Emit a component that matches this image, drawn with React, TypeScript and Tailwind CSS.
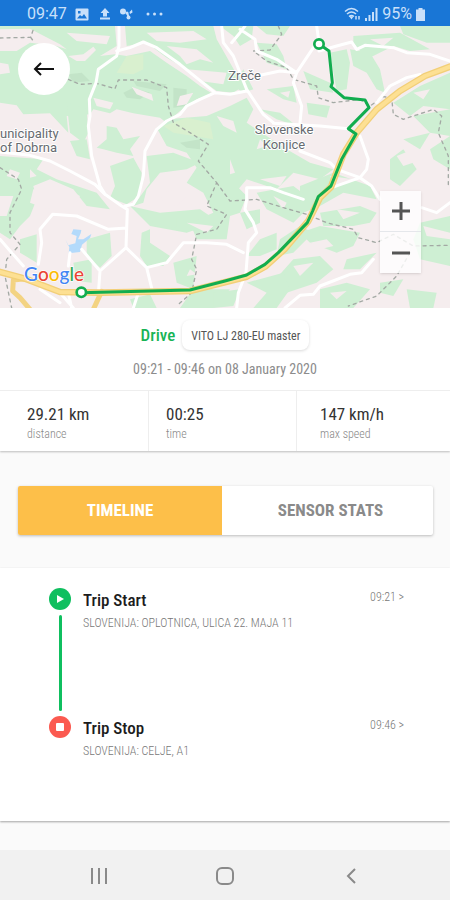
interface Stat {
    value: string;
    label: string;
    pad: string;
}

interface TripEvent {
    title: string;
    place: string;
    time: string;
    kind: "start" | "stop";
}

const stats: Stat[] = [
    { value: "29.21 km", label: "distance", pad: "pl-[27px]" },
    { value: "00:25", label: "time", pad: "pl-[17px]" },
    { value: "147 km/h", label: "max speed", pad: "pl-[23px]" },
];

const events: TripEvent[] = [
    { title: "Trip Start", place: "SLOVENIJA: OPLOTNICA, ULICA 22. MAJA 11", time: "09:21 >", kind: "start" },
    { title: "Trip Stop", place: "SLOVENIJA: CELJE, A1", time: "09:46 >", kind: "stop" },
];

// wooded areas
const woods = [
    "M0 0H345L350 60 300 90 345 85 380 90 450 75 500 110 560 150 600 180 640 205 590 220 540 255 500 290 480 275 400 262 350 250 330 262 280 250 270 265 200 270 205 320 150 262 70 265 50 238 0 230Z",
    "M375 0H640L650 40 690 110 730 180 700 200 650 195 560 130 500 95 440 50 380 60Z",
    "M660 0H760L755 40 720 60 700 30Z",
    "M770 0H870L850 30 800 25Z",
    "M770 50L830 55 850 90 860 130 800 110Z",
    "M470 305L500 280 620 270 690 240 740 215 760 250 740 290 800 330 860 370 930 410 1000 430 960 460 880 440 830 490 740 460 690 520 660 490 600 440 560 380 500 360Z",
    "M200 230L260 250 265 320 250 350 210 320Z",
    "M210 345L260 340 270 400 230 390Z",
    "M320 300L350 305 370 340 420 330 390 370 400 390 350 380 310 370 290 365 320 340Z",
    "M330 420L400 395 425 440 420 510 380 535 330 515 345 480Z",
    "M0 390L130 400 110 430 170 460 230 480 290 500 330 550 260 540 220 490 150 460 100 480 110 520 90 570 60 600 30 640 0 620Z",
    "M60 640L110 625 110 710 60 680Z",
    "M260 640L330 620 335 690 300 725 260 690Z",
    "M220 710L275 700 275 770 230 765Z",
    "M440 390L520 380 600 410 560 430 480 440 440 490 430 530 400 540 450 470Z",
    "M390 540L480 560 600 550 630 570 590 590 620 600 560 620 450 600Z",
    "M620 380L680 450 740 510 720 560 690 570 680 640 590 640 570 590 640 560 610 500 560 470Z",
    "M425 620L450 610 450 650 510 690 490 720 440 720 420 690Z",
    "M520 710L590 690 580 780 640 790 690 790 640 846H540L580 790 530 770Z",
    "M450 575L530 575 530 605 465 600Z",
    "M730 130L760 190 730 200 700 180Z",
    "M910 135L990 170 1000 200 930 190Z",
    "M990 80L1040 70 1050 110 1040 190 1010 195Z",
    "M1050 70L1110 80 1140 130 1155 200 1130 190 1100 140 1060 120Z",
    "M1060 30L1200 20 1290 70 1230 75 1180 60 1100 100 1060 50Z",
    "M1200 0H1350V50L1280 50 1210 25Z",
    "M800 190L880 180 890 230 850 220Z",
    "M780 250L840 260 890 300 830 280Z",
    "M920 230L990 240 980 275 925 265Z",
    "M1180 230L1260 180 1350 140V250L1270 240 1230 270Z",
    "M1240 270L1350 250V330L1290 320Z",
    "M1170 400L1210 370 1250 430 1200 480 1170 460Z",
    "M1210 340L1290 320 1260 370Z",
    "M1290 370L1350 330V430L1300 400Z",
    "M900 480L1000 440 1110 480 1130 520 1030 500 960 540 900 520Z",
    "M770 500L880 480 960 540 910 560 880 590 800 550Z",
    "M960 560L1080 540 1130 560 1110 590 1060 600 970 600Z",
    "M900 620L960 600 1080 620 1060 660 1010 680 930 650Z",
    "M1260 590L1350 570V720L1260 700 1240 640Z",
    "M840 640L900 600 940 620 880 680 830 690Z",
    "M720 560L780 550 780 590 740 610Z",
    "M780 640L830 620 830 670 780 690 740 690Z",
    "M880 700L960 690 1000 730 950 770 860 800 800 790Z",
    "M740 770L850 740 870 790 830 846H760L800 800Z",
    "M1040 700L1130 680 1080 730 1030 730Z",
    "M960 790L1040 770 1110 790 1060 846H960Z",
    "M1140 770L1210 760 1180 810 1140 800Z",
    "M1220 790L1310 800 1300 846H1230Z",
    "M640 800L720 790 700 840 640 846Z",
    "M390 820L450 805 470 846H400Z",
];

// small fields that break up the woods
const clearings = [
    "M0 10L90 8 180 55 200 70 170 60 90 50 50 75 0 75Z",
    "M200 20L330 30 320 55 230 45Z",
    "M205 90L250 85 280 62 288 72 255 105 230 105Z",
    "M0 110L25 115 30 140 0 145Z",
    "M395 182L455 205 460 225 410 205Z",
    "M440 20L580 15 620 40 540 50 470 45Z",
    "M500 60L590 70 640 110 600 100 560 115 540 90Z",
    "M560 130L680 140 670 175 600 165Z",
    "M540 210L580 200 560 235 530 240Z",
    "M280 215L340 230 330 250 290 240Z",
    "M650 270L700 285 710 320 670 300Z",
    "M780 340L800 360 770 370Z",
    "M780 460L860 450 840 480Z",
    "M690 400L705 440 690 445Z",
    "M30 430L60 440 50 460 20 450Z",
    "M90 430L110 450 90 455Z",
    "M0 510L40 510 20 570 0 570Z",
    "M100 490L180 480 240 510 210 560 130 545 90 530Z",
    "M590 510L620 530 570 545Z",
    "M480 500L540 490 560 510 530 540 490 530Z",
    "M560 590L640 600 620 620Z",
    "M690 580L720 600 690 620Z",
    "M630 700L670 720 640 760 610 740Z",
    "M930 650L980 640 1000 660 960 670Z",
    "M990 450L1060 460 1010 480Z",
    "M820 510L860 530 850 550Z",
    "M1010 550L1080 560 1030 580Z",
    "M1190 390L1240 370 1270 400 1210 420Z",
    "M1240 200L1290 190 1270 220Z",
    "M1270 600L1350 620V640L1280 630Z",
    "M1110 40L1180 35 1150 60Z",
    "M570 730L590 745 560 750Z",
    "M840 200L870 195 865 215Z",
    "M880 720L940 710 900 750Z",
    "M990 800L1040 795 1010 820Z",
];

const hills = [
    "M205 145L245 140 270 165 220 170Z",
    "M370 200L400 185 450 200 420 220 380 215Z",
    "M400 165L500 175 480 195 410 180Z",
    "M520 185L560 190 560 240 520 245Z",
    "M540 350L600 340 600 370 560 365Z",
];

const meadows = [
    "M380 90L430 85 430 130 400 145 350 140Z",
    "M490 300L560 275 630 290 640 340 580 330 520 320Z",
];

const roads = [
    "M357 0V60L350 90 295 130 288 170 268 220 270 270 265 300 275 390 300 480 315 505 365 540 382 550 378 665 300 735 296 790",
    "M350 75L390 65 430 48 470 65 540 115 645 200 690 205 740 195",
    "M645 200L600 220 560 240 540 265 500 285 470 310 435 375 430 450 415 510 400 535 375 540",
    "M0 378L90 388 150 405 210 435 285 475 315 505",
    "M378 665L440 725 456 790",
    "M440 725L500 710 550 650 620 650 680 655 730 680",
    "M115 715L125 650 120 610 158 565 230 570 325 610 380 606",
    "M0 640L35 680 70 720",
    "M245 670L300 735M210 680L205 720M180 800L220 846M205 800L215 846M415 800L400 846M120 790L180 830",
    "M665 0L670 50 700 90 740 190 790 265 820 290",
    "M720 10L765 40 770 75 830 100 890 140 880 170 905 240 900 290",
    "M735 0L720 20 695 50",
    "M780 148L840 135 890 140 910 110 950 50",
    "M950 0L957 50",
    "M957 75L1010 60 1055 48 1070 70 1095 58 1180 65 1220 80 1290 85 1350 105",
    "M1130 230L1170 180 1220 155 1260 145",
    "M820 292L960 300 1045 308",
    "M900 375L990 410 1010 430 1080 455 1115 480 1140 520",
    "M1080 330L1105 400 1100 430 1080 455M1080 455L980 490",
    "M910 520L850 500 810 485 740 485 740 520 735 550 760 590 770 620 745 650 738 740 715 800 710 846",
    "M855 846L900 808 940 805 960 780 1050 745 1085 740 1120 700",
    "M1265 545L1310 560 1350 530",
];

const borders = [
    "M0 36L92 34 100 10M92 34L100 45",
    "M205 160L240 175 290 172 345 188 355 162 440 162 500 185 505 240 520 290 570 320 625 355 595 405 650 470 620 540 680 565 650 610 590 625 575 700 590 730 575 800 530 840",
    "M0 425L55 460 65 490 30 560 30 620 60 655 20 700 15 750 35 846",
    "M650 470L690 525 770 520 850 545 920 565 980 590 1060 610 1075 635 1130 650 1180 625 1240 660 1350 658",
    "M835 0L845 25 810 72 760 75 800 105 860 125 880 160 950 180 955 215 1000 230 1080 220 1110 240 1150 212 1175 215 1180 265 1210 280 1300 250 1325 270 1315 320 1345 390 1345 480",
    "M1230 680L1190 750 1130 810 1045 840",
];

const motorway = "M0 738L75 758 180 798 300 800 570 795 740 752 795 722 855 668 925 585 960 515 993 483 1030 385 1070 320 1130 250 1200 195 1275 150 1350 122";
const track = "M243 800L570 792 675 765 740 747 795 715 835 680 922 590 938 555 955 512 993 480 1025 400 1068 324 1045 308 1107 245 1095 222 1032 215 993 182 997 170 987 75 957 54";

function StatusBar() {
    return (
        <header className="flex h-[26px] items-center justify-between bg-[#1976d6] pl-[27px] pr-[25px] pt-0.5 text-[#c9e0fa] font-[Roboto,sans-serif]">
            <div className="flex items-center gap-2">
                <span className="text-base leading-none">09:47</span>
                <svg width="14" height="13" viewBox="0 0 14 13" fill="currentColor">
                    <path fillRule="evenodd" d="M1.500 0.500H12.500a1 1 0 0 1 1 1V11.500a1 1 0 0 1-1 1H1.500a1 1 0 0 1-1-1V1.500a1 1 0 0 1 1-1ZM2 10.500H12L9 6 7 8.500 5 7ZM3 3V5.500H5.500V3Z" />
                </svg>
                <svg width="12" height="12" viewBox="0 0 12 12" fill="currentColor" className="ml-0.5">
                    <path d="M6 0L10.500 5H8V8.500H4V5H1.500ZM1 9.500H11V11.500H1Z" />
                </svg>
                <svg width="15" height="12" viewBox="0 0 15 12" fill="currentColor">
                    <circle cx="4" cy="3.500" r="3" />
                    <circle cx="8" cy="5" r="1.500" />
                    <circle cx="9.500" cy="9.500" r="2" />
                    <path d="M7 5L9 4.500 11 10 9 10ZM10.500 4L13 1.500 13.500 4.500 11 6Z" />
                </svg>
                <svg width="17" height="4" viewBox="0 0 17 4" fill="currentColor" className="ml-1">
                    <circle cx="2" cy="2" r="1.500" />
                    <circle cx="8.500" cy="2" r="1.500" />
                    <circle cx="15" cy="2" r="1.500" />
                </svg>
            </div>
            <div className="flex items-center gap-1">
                <svg width="17" height="14" viewBox="0 0 17 14" fill="none" stroke="currentColor" strokeWidth="1.500">
                    <path d="M1 4.500Q7.500 -1.500 14 4.500M3 7Q7.500 3 12 7M5 9.500Q7.500 7.500 10 9.500" />
                    <path d="M5 9L7.500 12.500 9.500 9.500Z" fill="currentColor" stroke="none" />
                    <path d="M12 9V12.500M15 9V12.500" />
                </svg>
                <svg width="13" height="13" viewBox="0 0 13 13" fill="currentColor">
                    <path d="M0 10H2V13H0ZM3.500 7H5.500V13H3.500ZM7 4H9V13H7ZM10.500 0H12.500V13H10.500Z" />
                </svg>
                <span className="text-base leading-none">95%</span>
                <svg width="9" height="13" viewBox="0 0 9 13" fill="currentColor">
                    <path d="M2.500 0H6.500V1.500H9V13H0V1.500H2.500Z" />
                </svg>
            </div>
        </header>
    );
}

function TripMap() {
    return (
        <section className="relative h-[282px] overflow-hidden bg-[#f5edee]">
            <svg
                className="size-full"
                viewBox="0 0 1350 846"
                preserveAspectRatio="xMidYMid slice"
                fill="none"
                strokeLinejoin="round"
                strokeLinecap="round"
                role="img"
                aria-label="Trip map"
            >
                {woods.map((d) => (
                    <path key={d} d={d} fill="#ceefd3" />
                ))}
                <path d={meadows.join("")} fill="#d9f0cf" />
                <path d={hills.join("")} fill="#c3e4c8" />
                <path d={clearings.join("")} fill="#f5edee" />
                <path d="M196 640L204 658 226 652 230 630 214 624 220 610 244 612 242 622 234 640 250 640 274 624 270 636 246 656 240 678 206 682 208 664Z" fill="#b3dafb" />
                <path d={borders.join("")} stroke="#a3a9a4" strokeWidth="4" strokeDasharray="9 12" />
                <path d={roads.join("")} stroke="#fff" strokeWidth="9" />

                <path d="M75 758L40 762 38 795 60 815 90 850M305 796L280 850" stroke="#f3d382" strokeWidth="15" />
                <path d={motorway} stroke="#f2cf78" strokeWidth="20" />
                <path d={motorway} stroke="#fde093" strokeWidth="12" />

                <path d={track} stroke="#12ad4f" strokeWidth="9" />
                <circle cx="244" cy="799" r="14" fill="#fff" stroke="#12ad4f" strokeWidth="8" />
                <circle cx="957" cy="54" r="14" fill="#fff" stroke="#12ad4f" strokeWidth="8" />

                <g fill="#666b70" stroke="#fff" strokeWidth="6" paintOrder="stroke" fontSize="39" fontFamily="Roboto, sans-serif">
                    <text x="0" y="335">unicipality</text>
                    <text x="0" y="378">of Dobrna</text>
                    <text x="685" y="163">Zreče</text>
                    <text x="852" y="325" textAnchor="middle">Slovenske</text>
                    <text x="852" y="370" textAnchor="middle">Konjice</text>
                </g>
                <text x="72" y="764" fontSize="57" fontWeight="500" stroke="#fff" strokeWidth="4" paintOrder="stroke" fontFamily="Lato, sans-serif">
                    <tspan fill="#4285f4">G</tspan>
                    <tspan fill="#ea4335">o</tspan>
                    <tspan fill="#fbbc05">o</tspan>
                    <tspan fill="#4285f4">g</tspan>
                    <tspan fill="#34a853">l</tspan>
                    <tspan fill="#ea4335">e</tspan>
                </text>
            </svg>

            <button aria-label="Back" className="absolute left-[18px] top-[17px] flex size-[52px] items-center justify-center rounded-full bg-white text-[#111]">
                <svg width="22" height="14" viewBox="0 0 22 14" fill="none" stroke="currentColor" strokeWidth="2">
                    <path d="M21 7H2M8 1L2 7 8 13" />
                </svg>
            </button>

            <div className="absolute bottom-[35px] right-[29px] flex w-[41px] flex-col divide-y divide-gray-200 bg-white/80 text-[#555] shadow">
                <button aria-label="Zoom in" className="flex h-[41px] items-center justify-center">
                    <svg width="18" height="18" viewBox="0 0 18 18" stroke="currentColor" strokeWidth="3">
                        <path d="M0 9H18M9 0V18" />
                    </svg>
                </button>
                <button aria-label="Zoom out" className="flex h-[41px] items-center justify-center">
                    <svg width="18" height="18" viewBox="0 0 18 18" stroke="currentColor" strokeWidth="3">
                        <path d="M0 9H18" />
                    </svg>
                </button>
            </div>
        </section>
    );
}

function TripSummary() {
    return (
        <section className="bg-white shadow-[0_1px_2px_rgba(0,0,0,0.25)]">
            <div className="flex items-center justify-center gap-[7px] pt-3">
                <h1 className="text-[17px] font-medium leading-5 text-[#17b456]">Drive</h1>
                <span className="rounded-lg bg-white px-[9px] pt-2 pb-1.5 text-[12px] leading-4 text-[#555] shadow-[0_1px_3px_rgba(0,0,0,0.15)]">
                    VITO LJ 280-EU master
                </span>
            </div>
            <p className="pt-[9px] pb-[11px] text-center text-[14px] leading-5 text-[#8c8c8c]">09:21 - 09:46 on 08 January 2020</p>
            <dl className="grid grid-cols-[149fr_148fr_153fr] divide-x divide-[#eeeeee] border-t border-[#eeeeee]">
                {stats.map((stat) => (
                    <div key={stat.label} className={`flex flex-col-reverse pt-[13px] pb-1.5 ${stat.pad}`}>
                        <dt className="text-[12px] font-light leading-[21px] text-[#888]">{stat.label}</dt>
                        <dd className="text-[17px] leading-5 text-[#333]">{stat.value}</dd>
                    </div>
                ))}
            </dl>
        </section>
    );
}

function Timeline() {
    return (
        <section className="bg-white shadow-[0_1px_2px_rgba(0,0,0,0.35)]">
            <ol className="pb-[59px] pt-5">
                {events.map((event) => (
                    <li key={event.title} className="flex pl-[49px] pr-[46px]">
                        <div className="flex w-[22px] shrink-0 flex-col items-center">
                            {event.kind === "start" ? (
                                <svg width="22" height="22" viewBox="0 0 22 22">
                                    <circle cx="11" cy="11" r="11" fill="#0fbf5f" />
                                    <path d="M8 7L15 11 8 15Z" fill="#fff" />
                                </svg>
                            ) : (
                                <svg width="22" height="22" viewBox="0 0 22 22">
                                    <circle cx="11" cy="11" r="11" fill="#fb5a50" />
                                    <rect x="7" y="7" width="8" height="8" rx="1" fill="#fff" />
                                </svg>
                            )}
                            {event.kind === "start" && <div className="my-[5px] h-24 w-[3px] rounded-full bg-[#0fbf5f]" />}
                        </div>
                        <div className="ml-3 flex-1">
                            <h2 className="text-[17px] font-medium leading-6 text-[#1c1c1c]">{event.title}</h2>
                            <p className="text-[12px] font-light leading-[22px] text-[#777]">{event.place}</p>
                        </div>
                        <a href="#" className="text-[12px] font-light leading-[18px] text-[#777]">{event.time}</a>
                    </li>
                ))}
            </ol>
        </section>
    );
}

function NavBar() {
    return (
        <nav className="mt-auto grid h-[50px] grid-cols-3 bg-[#f1f1f1] px-9 pt-0.5 text-[#8a8a8a]">
            <button aria-label="Recent apps" className="flex items-center justify-center">
                <svg width="18" height="16" viewBox="0 0 18 16" stroke="currentColor" strokeWidth="2">
                    <path d="M2 0V16M9 0V16M16 0V16" />
                </svg>
            </button>
            <button aria-label="Home" className="flex items-center justify-center">
                <svg width="18" height="18" viewBox="0 0 18 18" fill="none" stroke="currentColor" strokeWidth="2">
                    <rect x="1" y="1" width="16" height="16" rx="5" />
                </svg>
            </button>
            <button aria-label="Go back" className="flex items-center justify-center">
                <svg width="10" height="16" viewBox="0 0 10 16" fill="none" stroke="currentColor" strokeWidth="2">
                    <path d="M9 1L2 8 9 15" />
                </svg>
            </button>
        </nav>
    );
}

export default function App() {
    return (
        <div className="flex min-h-screen flex-col bg-[#fafafa] font-['Roboto_Condensed',Roboto,sans-serif]">
            <StatusBar />
            <TripMap />
            <TripSummary />

            <div role="tablist" className="mt-[35px] mb-[33px] ml-[18px] mr-[17px] grid h-[49px] grid-cols-[204fr_211fr] overflow-hidden rounded-xs bg-white text-[17px] font-bold shadow-[0_1px_3px_rgba(0,0,0,0.25)]">
                <button role="tab" aria-selected="true" className="bg-[#fdbf49] text-white">
                    TIMELINE
                </button>
                <button role="tab" aria-selected="false" className="pl-1.5 text-[#8a8a8a]">
                    SENSOR STATS
                </button>
            </div>

            <Timeline />
            <NavBar />
        </div>
    );
}
